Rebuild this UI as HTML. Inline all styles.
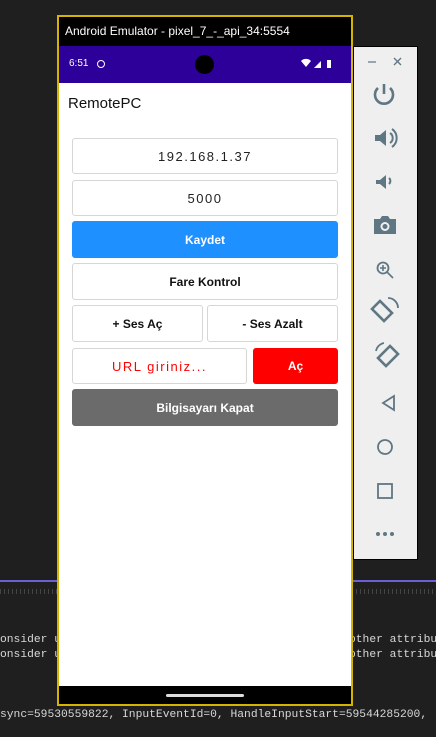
<!DOCTYPE html>
<html><head><meta charset="utf-8"><style>
*{margin:0;padding:0;box-sizing:border-box}
body{width:436px;height:737px;background:#1f1f1f;position:relative;overflow:hidden;font-family:"Liberation Sans",sans-serif}
.a{position:absolute}
.box{position:absolute;border:1px solid #d6d6d6;border-radius:3px;background:#fff;display:flex;align-items:center;justify-content:center;font-size:13px;color:#222}
.btn{font-weight:bold;font-size:12px;color:#111}
.con{position:absolute;font-family:"Liberation Mono",monospace;font-size:11.3px;color:#d8d8d8;white-space:pre;line-height:14px}
</style></head><body>
<div class="a" style="left:0;top:580px;width:436px;height:2px;background:#6b5fd6"></div>
<div class="a" style="left:0;top:589px;width:436px;height:5px;background:repeating-linear-gradient(90deg,#444 0 1px,transparent 1px 4px)"></div>
<div class="a" style="left:0;top:628px;width:436px;height:40px;overflow:hidden">
<div class="con" style="left:0;top:-10px;color:#aaa">onsider u</div>
<div class="con" style="left:0;top:5px">onsider u</div>
<div class="con" style="left:0;top:20px">onsider u</div>
<div class="con" style="left:352px;top:-10px;color:#aaa">ther attribu</div>
<div class="con" style="left:349px;top:5px">other attribu</div>
<div class="con" style="left:349px;top:20px">other attribu</div>
</div>
<div class="con" style="left:0;top:708px">sync=59530559822, InputEventId=0, HandleInputStart=59544285200,</div>

<!-- side panel -->
<div class="a" style="left:353px;top:46px;width:65px;height:514px;background:#efefef;border:1px solid #000">
<svg width="63" height="512" viewBox="0 0 63 512" fill="none" stroke="#5f7782" stroke-width="2.6">
<line x1="14" y1="15" x2="22" y2="15" stroke-width="1.2"/>
<path d="M40 11l7 7M47 11l-7 7" stroke-width="1.4"/>
<path d="M24 41a9 9 0 1 0 12 0M30 37v10"/>
<path d="M21 88h5l6-5v16l-6-5h-5z" fill="#5f7782" stroke="none"/><path d="M36 86a6 6 0 0 1 0 10M38 82a11 11 0 0 1 0 18" stroke-width="2"/>
<path d="M22 133h4l6-5v14l-6-5h-4z" fill="#5f7782" stroke="none"/><path d="M35 131a4 4 0 0 1 0 6" stroke-width="2"/>
<path d="M20 172h6l2-3h6l2 3h6v15h-22z" fill="#5f7782" stroke="none"/><circle cx="31" cy="179.5" r="3.5" stroke="#efefef" stroke-width="2"/>
<circle cx="29" cy="221" r="5.5" stroke-width="1.8"/><path d="M33 225l6 6M29 218v6M26 221h6" stroke-width="1.6"/>
<path d="M26 254l12 12-8 8-12-12z" stroke-width="2.6"/><path d="M34 251a10 10 0 0 1 10 10" stroke-width="1.8"/>
<path d="M36 299l-12 12 8 8 12-12z" stroke-width="2.6"/><path d="M22 304a10 10 0 0 1 8-8" stroke-width="1.8"/>
<path d="M40 349l-11 7 11 7z" stroke-width="1.8"/>
<circle cx="31" cy="400" r="7" stroke-width="1.8"/>
<rect x="24" y="437" width="14" height="14" stroke-width="1.8"/>
<g fill="#5f7782" stroke="none"><circle cx="24" cy="487" r="2"/><circle cx="31" cy="487" r="2"/><circle cx="38" cy="487" r="2"/></g>
</svg></div>

<!-- emulator -->
<div class="a" style="left:57px;top:15px;width:296px;height:691px;border:2px solid #d4b400;background:#000"></div>
<div class="a" style="left:65px;top:24px;color:#fff;font-size:12px">Android Emulator - pixel_7_-_api_34:5554</div>
<div class="a" style="left:59px;top:46px;width:292px;height:37px;background:#2c0099"></div>
<div class="a" style="left:69px;top:58px;color:#fff;font-size:10px">6:51</div>
<div class="a" style="left:97px;top:60px;width:8px;height:8px;border-radius:50%;border:1.5px solid #fff"></div>
<div class="a" style="left:195px;top:55px;width:19px;height:19px;border-radius:50%;background:#000"></div>
<svg class="a" style="left:300px;top:58px" width="36" height="12"><path d="M1 3a7 7 0 0 1 10 0l-5 6z" fill="#fff"/><path d="M14 10l7-7v7z" fill="#fff"/><rect x="27" y="2" width="4" height="8" fill="#fff"/></svg>
<div class="a" style="left:59px;top:83px;width:292px;height:603px;background:#fff"></div>
<div class="a" style="left:68px;top:95px;font-size:15px;color:#111">RemotePC</div>

<div class="box" style="left:72px;top:138px;width:266px;height:36px;letter-spacing:1.5px">192.168.1.37</div>
<div class="box" style="left:72px;top:180px;width:266px;height:36px;letter-spacing:1.5px">5000</div>
<div class="box btn" style="left:72px;top:221px;width:266px;height:37px;background:#1e90ff;border-color:#1e90ff;color:#fff">Kaydet</div>
<div class="box btn" style="left:72px;top:263px;width:266px;height:37px">Fare Kontrol</div>
<div class="box btn" style="left:72px;top:305px;width:131px;height:37px">+ Ses Aç</div>
<div class="box btn" style="left:207px;top:305px;width:131px;height:37px">- Ses Azalt</div>
<div class="box" style="left:72px;top:348px;width:175px;height:36px;color:#f00;letter-spacing:1.5px">URL giriniz...</div>
<div class="box btn" style="left:253px;top:348px;width:85px;height:36px;background:#f00;border-color:#f00;color:#fff">Aç</div>
<div class="box btn" style="left:72px;top:389px;width:266px;height:37px;background:#6b6b6b;border-color:#6b6b6b;color:#fff">Bilgisayarı Kapat</div>

<div class="a" style="left:166px;top:694px;width:78px;height:3px;border-radius:2px;background:#ddd"></div>
</body></html>
